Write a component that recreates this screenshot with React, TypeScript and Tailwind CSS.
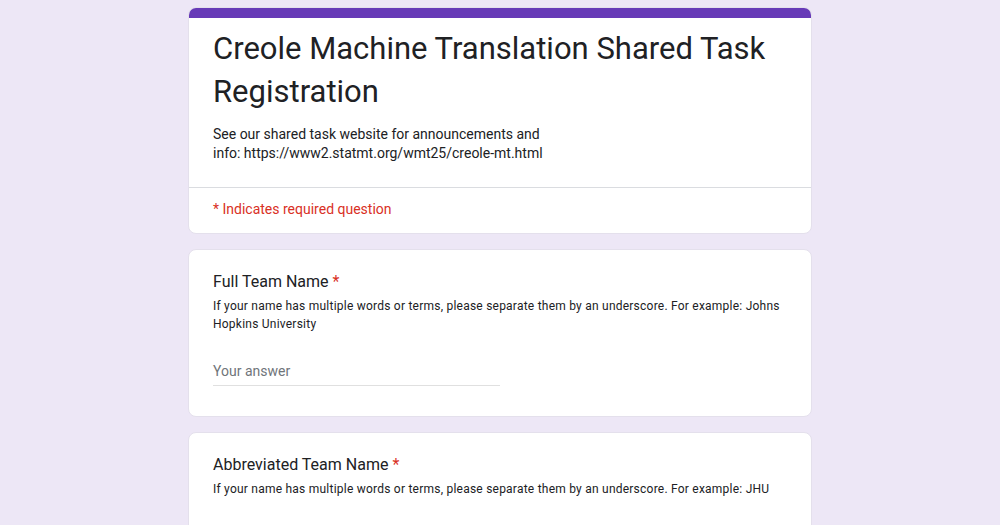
import React from 'react';

function Question({ title, help }: { title: string; help: string }) {
  return (
    <div className="bg-white rounded-lg border border-[#e4e0ec] px-6 pt-5 pb-[30px]">
      <div className="text-[16px] leading-6 text-[#202124]">
        {title} <span className="text-[#d93025]">*</span>
      </div>
      <div className="mt-[3px] text-[12px] leading-[18px] tracking-[0.23px] text-[#202124]">{help}</div>
      <div className="mt-[28px] w-1/2">
        <div className="text-[14px] leading-5 text-[#70757a] pb-1">Your answer</div>
        <div className="h-px bg-[#e0e0e0]" />
      </div>
    </div>
  );
}

export default function App() {
  return (
    <div className="min-h-screen bg-[#ede7f6] font-['Roboto',sans-serif]">
      <div className="w-[624px] mx-auto pt-[7px] flex flex-col gap-[15px]">
        <div className="bg-white rounded-lg border border-[#e4e0ec] overflow-hidden">
          <div className="h-[10px] bg-[#673ab7]" />
          <div className="px-6 pt-[9px] pb-[24px]">
            <h1 className="text-[31px] leading-[43px] text-[#202124]">
              Creole Machine Translation Shared Task Registration
            </h1>
            <p className="mt-3 w-[340px] text-[14px] leading-[19px] text-[#202124]">
              See our shared task website for announcements and info: https://www2.statmt.org/wmt25/creole-mt.html
            </p>
          </div>
          <div className="h-px bg-[#dadce0]" />
          <div className="px-6 pt-3 pb-[14px] text-[14px] leading-[19px] text-[#d93025]">
            * Indicates required question
          </div>
        </div>
        <Question
          title="Full Team Name"
          help="If your name has multiple words or terms, please separate them by an underscore. For example: Johns Hopkins University"
        />
        <Question
          title="Abbreviated Team Name"
          help="If your name has multiple words or terms, please separate them by an underscore. For example: JHU"
        />
      </div>
    </div>
  );
}
